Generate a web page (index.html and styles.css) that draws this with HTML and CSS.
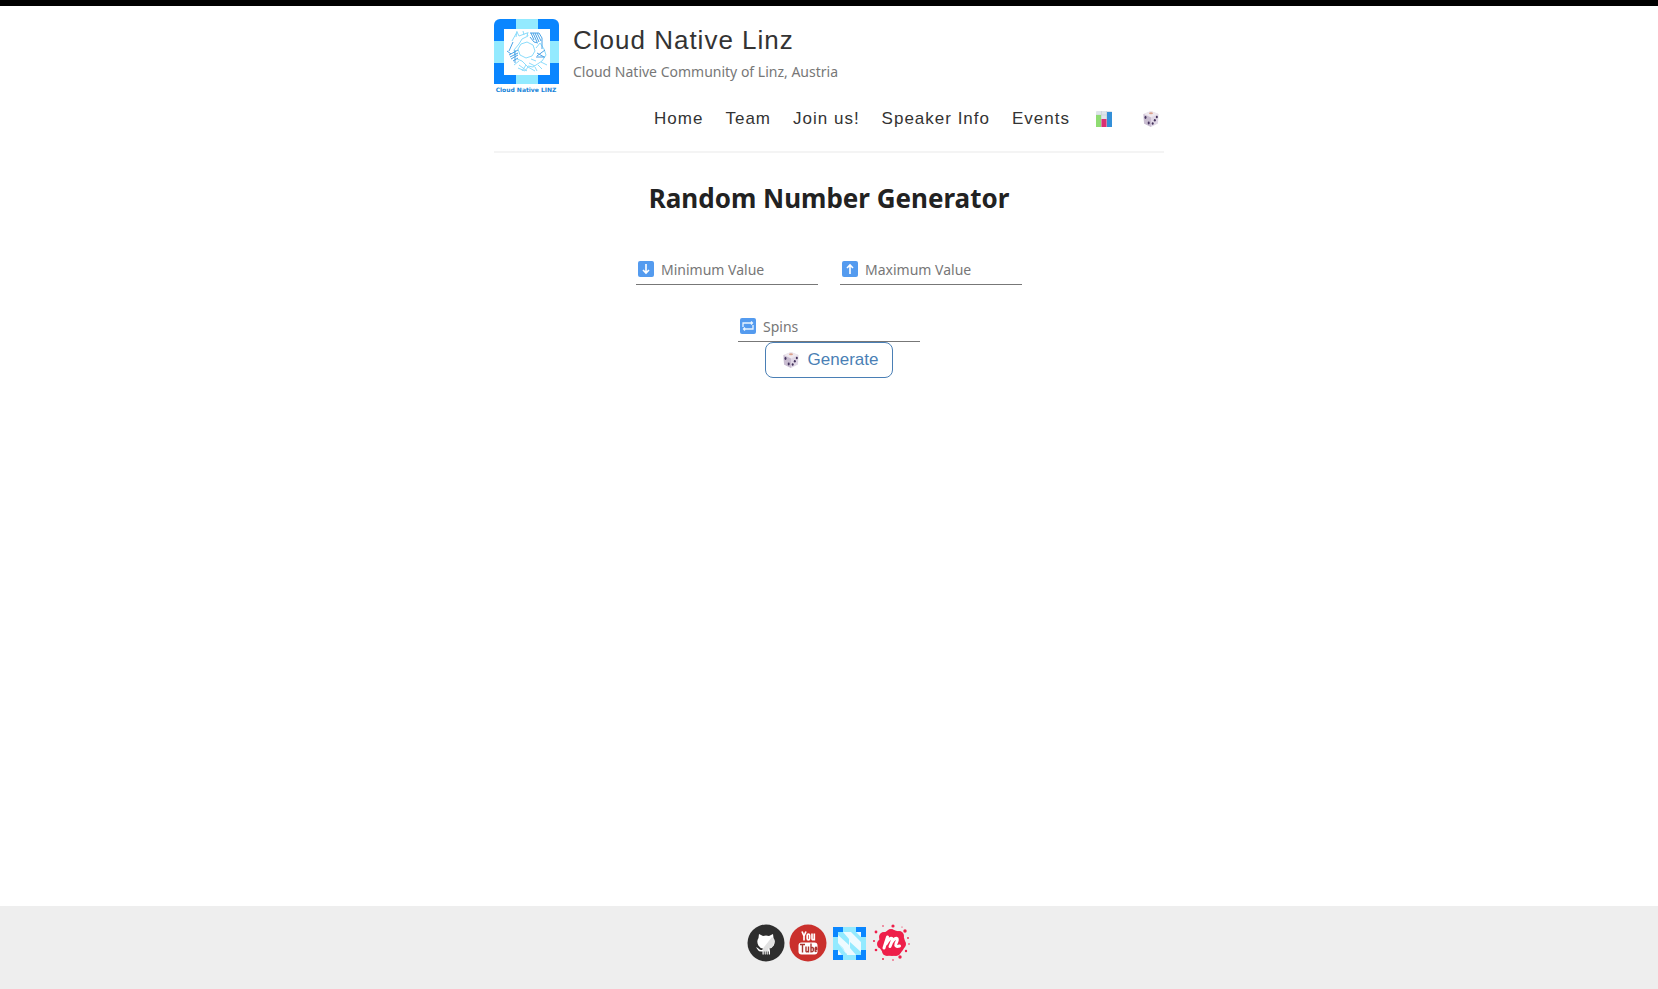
FILE: index.html
```
<!DOCTYPE html>
<html lang="en">
<head>
<meta charset="utf-8">
<meta name="viewport" content="width=device-width, initial-scale=1">
<title>Cloud Native Linz</title>
<link rel="stylesheet" href="styles.css">
</head>
<body>
<svg class="sprite" aria-hidden="true">
  <symbol id="dice" viewBox="0 0 18 18">
    <path d="M9 1 16.500 4 16 13.500 9 17 2 13.500 1.500 4z" fill="#e0d7e6"/>
    <path d="M9 1 16.500 4 9 7.500 1.500 4z" fill="#eee8ee"/>
    <path d="M1.500 4 9 7.500V17L2 13.500z" fill="#c9bdd1"/>
    <ellipse cx="9" cy="3.200" rx="2" ry="1" fill="#d9a08c"/>
    <g fill="#43325c"><ellipse cx="3.500" cy="7.500" rx="1" ry="1.400"/><ellipse cx="6.700" cy="13" rx="1" ry="1.400"/><ellipse cx="14.800" cy="7" rx="1" ry="1.300"/><ellipse cx="12.800" cy="10.300" rx="1" ry="1.300"/><ellipse cx="10.700" cy="13.500" rx="1" ry="1.300"/></g>
  </symbol>
</svg>
<div class="page">
  <header class="masthead">
    <div class="brand">
      <a class="logo" href="#" aria-label="Cloud Native Linz home">
        <svg viewBox="0 0 65 74" width="65" height="74">
          <defs><clipPath id="round"><rect width="65" height="90" rx="6"/></clipPath></defs>
          <g clip-path="url(#round)">
            <rect width="65" height="65" fill="#0a86ff"/>
            <path d="M22 0h22v65H22zM0 22h65v22H0z" fill="#93eaff"/>
          </g>
          <rect x="10" y="10" width="46" height="46" fill="#fff"/>
          <g fill="none" stroke="#8bdcfb" stroke-width="1">
            <path d="M27 25l6-2 6 3 2 6-3 5-6 2-6-3-2-6z"/>
            <path d="M18 22l5-9 2 4 8-3 1 3-6 3-3 5-5 6 1 5M23 12l-1 6M29 12l1 4M34 13l-1 4"/>
            <path d="M23 40l5 2 6 6-3 4-7-3M28 52l4-6M33 52l-8-6M20 46l5-4M34 48l7 4M35 44l6 3M37 40l5 2"/>
            <path d="M42 29l4-5 4 6 2 6-4 6-9 6-5-1M44 46l4 4M41 48l2 4M47 43l6 3"/>
          </g>
          <g fill="none" stroke="#4aa3e6" stroke-width="1">
            <path d="M19 23l-4 9M13 32l4 3M15 36l9-5M16 38l8-4M17 40l7-4M19 42l5-3M21 31v13"/>
            <path d="M36 14h9l3 5v11M37 14l3 7M39 14l4 9M41 14l4 9M43 14l4 8M36 18l4 5 4 1"/>
            <path d="M43 37l8-6M43 34l7 4M42 38h9"/>
          </g>
          <text class="logo-text" x="32" y="73" text-anchor="middle">Cloud Native LINZ</text>
        </svg>
      </a>
      <div class="brand-text">
        <a class="site-name" href="#">Cloud Native Linz</a>
        <p class="tagline">Cloud Native Community of Linz, Austria</p>
      </div>
    </div>
    <nav class="nav">
      <a href="#">Home</a>
      <a href="#">Team</a>
      <a href="#">Join us!</a>
      <a href="#">Speaker Info</a>
      <a href="#">Events</a>
      <a class="icon-link" href="#" aria-label="Statistics"><svg viewBox="0 0 18 18" width="18" height="18">
        <rect x="1" y="1" width="16" height="16" rx="1" fill="#dfe5ea"/>
        <path d="M6.500 1v16M11.500 1v16M1 5h16" stroke="#c6cdd4" stroke-width=".6"/>
        <rect x="1" y="5" width="5" height="12" fill="#8fdc72"/><rect x="6.500" y="9" width="5" height="8" fill="#db2f73"/><rect x="12" y="2" width="5" height="15" fill="#338fd8"/></svg></a>
      <a class="icon-link" href="#" aria-label="Random numbers"><svg width="18" height="18"><use href="#dice"/></svg></a>
    </nav>
  </header>
  <main class="content">
    <h1>Random Number Generator</h1>
    <form class="generator">
      <div class="fields">
        <label class="field">
          <svg viewBox="0 0 16 16" width="16" height="16"><rect width="16" height="16" rx="2" fill="#549bef"/><path d="M8 3v9M5 9l3 3 3-3" fill="none" stroke="#fff" stroke-width="1.600"/></svg>
          <input type="text" inputmode="numeric" placeholder="Minimum Value" aria-label="Minimum Value">
        </label>
        <label class="field">
          <svg viewBox="0 0 16 16" width="16" height="16"><rect width="16" height="16" rx="2" fill="#549bef"/><path d="M8 13V4M5 7l3-3 3 3" fill="none" stroke="#fff" stroke-width="1.600"/></svg>
          <input type="text" inputmode="numeric" placeholder="Maximum Value" aria-label="Maximum Value">
        </label>
      </div>
      <label class="field">
        <svg viewBox="0 0 16 16" width="16" height="16"><rect width="16" height="16" rx="2" fill="#549bef"/><path d="M3 9V5h9.500M13 7v4H3.500M11 3.500 12.500 5 11 6.500M5 9.500 3.500 11 5 12.500" fill="none" stroke="#e9f5ff" stroke-width="1.300"/></svg>
        <input type="text" inputmode="numeric" placeholder="Spins" aria-label="Spins">
      </label>
      <button class="generate" type="button"><svg width="18" height="18"><use href="#dice"/></svg>Generate</button>
    </form>
  </main>
</div>
<footer class="footer">
  <a href="#" aria-label="GitHub"><svg viewBox="0 0 38 38" width="38" height="38">
    <circle cx="19" cy="19" r="18.500" fill="#2e2e2e"/>
    <path d="M12 10l4 2q3-.8 6 0l4-2 .5 4q2.500 3 .3 7.500-1.500 2.500-4.500 3 .7 1 .7 3v3h-1.200v-3h-1v3h-1v-3h-1v3h-1v-3h-1v3h-1.300v-3q-3.500.5-4.600-1.500-.8-2-2-2.500 2-.5 3 1.500 1.500 1.500 3.500.8l.5-1.300q-3-.5-4.500-3-2.200-4.500.1-7.500z" fill="#fff"/>
    <path d="M25 13L15.500 25l.5 1-.5 2v2h6l-.3-5.500q4-.5 5-3 2-4.500-.2-7.500z" fill="#aaa" opacity=".35"/>
  </svg></a>
  <a href="#" aria-label="YouTube"><svg viewBox="0 0 38 38" width="38" height="38">
    <circle cx="19" cy="19" r="18.500" fill="#ca302c"/>
    <rect x="9.500" y="18.500" width="19" height="12" rx="3" fill="#fff"/>
    <g fill="none" stroke-width="1.700">
      <path d="M13 7.500l2 4.500 2-4.500M15 12v4.500M18.200 11.500q0-1.500 1.200-1.500t1.200 1.500v3q0 1.500-1.200 1.500t-1.200-1.500zM23 9.500v5q0 1.500 1 1.200 1.300-.4 1.300-1.500M25.300 9.500v7" stroke="#fff"/>
      <path d="M11 20.500h5M13.500 20.500v8M17 22.500v4.500q0 1 1 .8 1.500-.5 1.500-1.300M19.500 22.500v6M22 19.500v9M22 24q2-1.200 2.300.3v2.200q-.3 1.800-2.300.8M27.500 26.500q-.5 1.500-1.300.7v-3q.8-1.800 1.500 0v1H26" stroke="#a93631" stroke-width="1.400"/>
    </g>
  </svg></a>
  <a href="#" aria-label="Cloud Native Computing Foundation"><svg viewBox="1 0 38 38" width="38" height="38">
    <rect x="3" y="3" width="33" height="33" fill="#93eaff"/>
    <path d="M3 3h10v5H8v5H3zM26 3h10v10h-5V8h-5zM3 26h5v5h5v5H3zM31 26h5v10H26v-5h5z" fill="#0a86ff"/>
    <rect x="8" y="8" width="23" height="23" fill="#eefbff"/>
    <path d="M8 8h5l6 7v6L8 11zM8 19l5 5 4 7H8l9-1zM20 18l11 10v3h-5l-6-7zM21 8h5l5 5v5z" fill="#93eaff"/>
    <path d="M8 19l9 12h-5l-4-5z" fill="#93eaff"/>
  </svg></a>
  <a href="#" aria-label="Meetup"><svg viewBox="0 0 38 38" width="38" height="38">
    <g fill="#ee1f4a"><circle cx="19" cy="19" r="13"/><circle cx="11" cy="13" r="5"/><circle cx="18" cy="10" r="5"/><circle cx="26" cy="12" r="5"/><circle cx="28" cy="20" r="5"/><circle cx="23" cy="27" r="5"/><circle cx="14" cy="27" r="5"/><circle cx="9" cy="20" r="5"/>
    <circle cx="20" cy="2" r="1.600"/><circle cx="10" cy="2" r=".8"/><circle cx="3" cy="8" r="1.400"/><circle cx="32" cy="7" r="1.700"/><circle cx="35" cy="14" r=".9"/><circle cx="1" cy="17" r="1"/><circle cx="36" cy="20" r=".8"/><circle cx="33" cy="27" r="1.200"/><circle cx="27" cy="33" r="1.700"/><circle cx="3" cy="26" r="1.300"/><circle cx="10" cy="35" r="1"/><circle cx="20" cy="36" r=".8"/><circle cx="29" cy="3" r=".6"/></g>
    <path d="M11 24q1.500-5 3.500-11M13 20q4-7 6-5.500 1 1-2 8M18.500 18.500q4-5.500 5.500-4 1 1.200-1 5-1.200 4 3.500 2.500" fill="none" stroke="#fff" stroke-width="3" stroke-linecap="round"/>
  </svg></a>
</footer>
</body>
</html>
```
FILE: styles.css
```
* { box-sizing: border-box; }

body {
  margin: 0;
  min-height: 100vh;
  display: flex;
  flex-direction: column;
  border-top: 6px solid #000;
  background: #fff;
  color: #222;
  font-family: "Noto Sans", sans-serif;
  font-size: 14px;
}

a { color: inherit; text-decoration: none; }
svg { display: block; flex: none; }
.sprite { position: absolute; width: 0; height: 0; }

.page {
  flex: 1;
  width: 100%;
  max-width: 670px;
  margin: 0 auto;
}

.masthead {
  padding-top: 13px;
  border-bottom: 2px solid #f4f4f4;
}

.brand { display: flex; gap: 14px; }
.brand-text { padding-top: 4px; }

.logo-text {
  font: bold 6px "DejaVu Sans", sans-serif;
  fill: #1683d8;
}

.site-name {
  display: block;
  color: #333;
  font: 26px/34px "Liberation Sans", Arial, sans-serif;
  letter-spacing: 1px;
}

.tagline {
  margin: 5px 0 0;
  color: #777;
  font-size: 14px;
  line-height: 20px;
}

.nav {
  display: flex;
  justify-content: flex-end;
  align-items: center;
  gap: 22px;
  padding: 13px 4px 19px 0;
  color: #333;
  font: 17px/26px "Liberation Sans", Arial, sans-serif;
  letter-spacing: 1px;
}

.icon-link { margin-left: 3px; }
.icon-link + .icon-link { margin-left: 7px; }

h1 {
  margin: 27px 0 38px;
  text-align: center;
  font-size: 26px;
  line-height: 36px;
}

.generator, .fields {
  display: flex;
  align-items: center;
}
.generator { flex-direction: column; }
.fields {
  gap: 22px;
  margin-bottom: 26px;
}

.field {
  display: flex;
  align-items: center;
  gap: 7px;
  width: 182px;
  height: 31px;
  padding: 0 2px;
  border-bottom: 1px solid #777;
}

.field input {
  flex: 1;
  min-width: 0;
  padding: 0;
  border: 0;
  outline: 0;
  background: none;
  color: #222;
  font: inherit;
}
.field input::placeholder { color: #777; opacity: 1; }

.generate {
  display: flex;
  align-items: center;
  gap: 8px;
  padding: 0 14px 0 16px;
  height: 36px;
  border: 1px solid #4a7fb5;
  border-radius: 8px;
  background: #fff;
  color: #4a7fb5;
  font: 17px "Liberation Sans", Arial, sans-serif;
}

.footer {
  display: flex;
  justify-content: center;
  gap: 4px;
  padding: 18px 0 27px;
  background: #eee;
}
```
